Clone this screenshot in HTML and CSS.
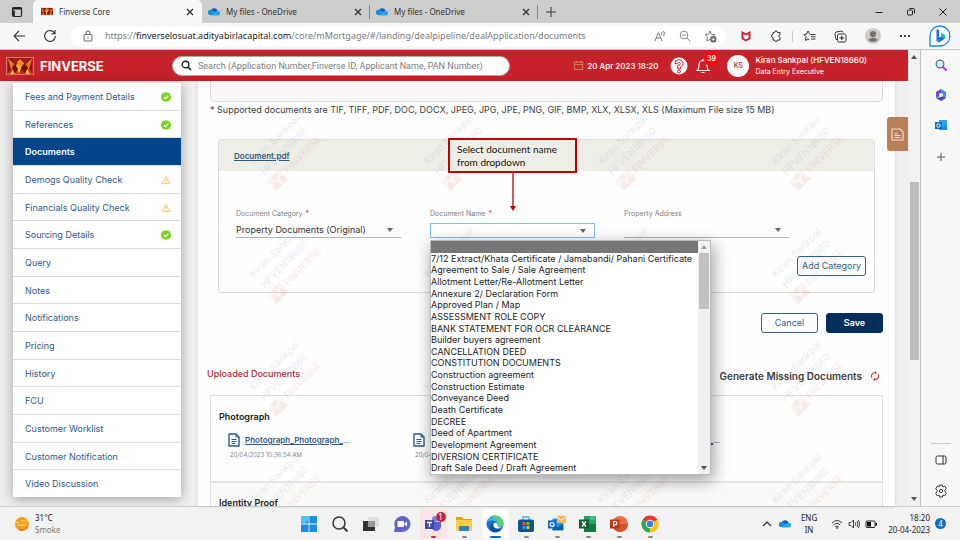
FILE: index.html
```
<!DOCTYPE html>
<html lang="en">
<head>
<meta charset="utf-8">
<meta name="viewport" content="width=device-width, initial-scale=1">
<title>Finverse Core</title>
<link rel="stylesheet" href="styles.css">
</head>
<body>
<svg class="defs" aria-hidden="true">
  <symbol id="i-cloud" viewBox="0 0 24 16"><path d="M7 4a7 7 0 0 1 12 2l-8 8H5A5 5 0 0 1 4 5z" fill="#0f5fb8"/><path d="M4 5a6 6 0 0 1 6 1l10 9H5A5 5 0 0 1 4 5z" fill="#1490df"/><path d="M19 6a5 5 0 0 1 0 10H5l9-7z" fill="#28a8ea"/></symbol>
  <symbol id="i-x" viewBox="0 0 10 10"><path d="M2 2l6 6M8 2L2 8" fill="none" stroke="currentColor" stroke-width="1.4"/></symbol>
  <symbol id="i-ok" viewBox="0 0 10 10"><path d="M5 0l1.4.8h1.7l.8 1.5L10 3.8v2.4L9 7.7l-.9 1.5H6.400L5 10l-1.400-.8H1.900L1 7.700 0 6.200V3.800l1-1.500.9-1.500h1.700z" fill="#7ed321"/><path d="M2.800 5.200l1.600 1.500 2.900-3.100" fill="none" stroke="#fff" stroke-width="1.300"/></symbol>
  <symbol id="i-warn" viewBox="0 0 12 10"><path d="M6 1l4.800 8.300H1.200z" fill="none" stroke="#fbbc3d" stroke-linejoin="round"/><path d="M6 3.800v2.700M6 7.200v1.200" stroke="#fbbc3d"/></symbol>
  <symbol id="i-doc" viewBox="0 0 12 14"><path d="M1 1h7l3 3v9H1z" fill="none" stroke="currentColor" stroke-width="1.400" stroke-linejoin="round"/><path d="M8 1v3h3" fill="none" stroke="currentColor"/><path d="M3.500 6.500h5M3.500 8.500h5M3.500 10.500h3.500" stroke="currentColor"/></symbol>
  <symbol id="i-logo" viewBox="0 0 28 18"><path fill="#8d1717" d="M0 0h28v18H0z"/><path fill="#d63a1f" d="M0 18L8 7l6 11zM14 18l7-12 7 12z"/><path fill="#e8742a" d="M0 0l8 7-4 6zM28 0l-8 7 4 6z"/><path fill="#a51a1a" d="M4 0h9L8 7zM15 0h9l-4 7z"/><path fill="#ffc02e" d="M14 3l2 6-3 9-4-9zM3 18l5-8 1 8zM20 18l2-7 3 7z"/><path fill="#7a1015" d="M8 7l4 5-4 6-3-8zM20 7l-5 4 4 7 4-7z"/><path fill="#ee8a2a" d="M14 1l5 5-4 4-2-1-3-4z"/></symbol>
</svg>

<header class="tabs">
  <button class="tool work" aria-label="Workspaces"><svg viewBox="0 0 12 12" width="12" height="12"><rect x="1.500" y="1.500" width="9" height="9" rx="1.500" fill="none" stroke="#222" stroke-width="1.200"/><path d="M1.500 2.500h9M3 4.500v5.500" stroke="#222" stroke-width="1.800"/></svg></button>
  <div class="tab on"><svg class="fav" viewBox="0 0 28 18"><use href="#i-logo"/></svg><span>Finverse Core</span><button class="tool" aria-label="Close tab"><svg width="10" height="10"><use href="#i-x"/></svg></button></div>
  <div class="tab"><svg class="fav"><use href="#i-cloud"/></svg><span>My files - OneDrive</span><button class="tool" aria-label="Close tab"><svg width="10" height="10"><use href="#i-x"/></svg></button></div>
  <div class="tab"><svg class="fav"><use href="#i-cloud"/></svg><span>My files - OneDrive</span><button class="tool" aria-label="Close tab"><svg width="10" height="10"><use href="#i-x"/></svg></button></div>
  <button class="tool plus" aria-label="New tab"><svg viewBox="0 0 12 12" width="12" height="12"><path d="M6 1v10M1 6h10" stroke="#333"/></svg></button>
  <div class="win">
    <button class="tool" aria-label="Minimize"><svg viewBox="0 0 10 10" width="10" height="10"><path d="M1.500 5.500h7" stroke="#222"/></svg></button>
    <button class="tool" aria-label="Restore"><svg viewBox="0 0 10 10" width="10" height="10"><rect x="1.500" y="3" width="5" height="5" rx="1" fill="none" stroke="#222"/><path d="M3.500 1.500h4a1 1 0 0 1 1 1v4" fill="none" stroke="#222"/></svg></button>
    <button class="tool" aria-label="Close"><svg viewBox="0 0 10 10" width="10" height="10"><path d="M1.500 1.500l7 7M8.500 1.500l-7 7" stroke="#222"/></svg></button>
  </div>
</header>

<nav class="bar" aria-label="Browser">
  <button class="tool nav" aria-label="Back"><svg viewBox="0 0 14 14" width="14" height="14"><path d="M13 7H2M7 2L2 7l5 5" fill="none" stroke="#333" stroke-width="1.100"/></svg></button>
  <button class="tool nav" aria-label="Refresh"><svg viewBox="0 0 14 14" width="14" height="14"><path d="M11.800 4.500A5.400 5.400 0 1 0 12.400 7M12 1v3.700H8.300" fill="none" stroke="#333" stroke-width="1.100"/></svg></button>
  <div class="addr">
    <svg viewBox="0 0 12 12" width="12" height="12"><rect x="2" y="4.500" width="8" height="6.500" rx="1" fill="none" stroke="#666"/><path d="M4 4.500V3a2 2 0 0 1 4 0v1.500" fill="none" stroke="#666"/><circle cx="6" cy="7.700" r=".8" fill="#666"/></svg>
    <div class="url">https://<b>finverselosuat.adityabirlacapital.com</b>/core/mMortgage/#/landing/dealpipeline/dealApplication/documents</div>
    <button class="tool" aria-label="Read aloud"><svg viewBox="0 0 12 12" width="12" height="12"><path d="M1 11L4.500 2.500 8 11M2.300 8h4.400M7.500 2q1.200 1 0 3M9.500 1q2 2 0 5" fill="none" stroke="#777"/></svg></button>
    <button class="tool" aria-label="Zoom out"><svg viewBox="0 0 12 12" width="12" height="12"><circle cx="5" cy="5" r="3.800" fill="none" stroke="#888"/><path d="M7.800 7.800l3.500 3.500M3.300 5h3.400" stroke="#888"/></svg></button>
    <button class="tool" aria-label="Add to favourites"><svg viewBox="0 0 13 13" width="13" height="13"><path d="M6 1l1.400 3.200 3.600.4-2.700 2.300M6 9.400L2.900 11l.7-3.900L1 4.600l3.600-.4L6 1" fill="none" stroke="#777"/><circle cx="9.300" cy="9.300" r="3.200" fill="#666"/><path d="M7.600 9.300H11M9.300 7.600V11" stroke="#fff" stroke-width=".8"/></svg></button>
  </div>
  <div class="exts">
    <button class="tool" aria-label="Security"><svg viewBox="0 0 12 12" width="12" height="12"><path d="M1.500 1L6 3.500 10.500 1v8L6 11.500 1.500 9zM3.500 4v4L6 9.500 8.500 8V4L6 5.500z" fill="#c8202f" fill-rule="evenodd"/></svg></button>
    <button class="tool" aria-label="Extensions"><svg viewBox="0 0 12 12" width="12" height="12"><path d="M3 2.500h1.500a1.500 1.500 0 0 1 3 0H10V5a1.200 1.200 0 0 0 0 2.500V10H7.500a1.500 1.500 0 0 1-3 0H3V7.500A1.500 1.500 0 0 1 3 4.500z" fill="none" stroke="#333"/></svg></button>
    <i class="rule"></i>
    <button class="tool" aria-label="Favourites"><svg viewBox="0 0 13 12" width="13" height="12"><path d="M7 4.200L5 1 3.700 4.100.9 4.500l2.200 2.300-.6 3.700L5 9l1.500.9M7.500 4.500h5M8 6.800h4.500M8 9h4.500" fill="none" stroke="#333"/></svg></button>
    <button class="tool" aria-label="Collections"><svg viewBox="0 0 13 13" width="13" height="13"><path d="M3 9.500H2L1 3.500 2 2l6-1 1.200 1.500" fill="none" stroke="#333"/><rect x="3.500" y="4" width="8.500" height="8" rx="1.500" fill="none" stroke="#333"/><path d="M7.800 5.800v4.400M5.600 8H10" stroke="#222"/></svg></button>
    <button class="tool" aria-label="Profile"><svg viewBox="0 0 16 16" width="16" height="16"><circle cx="8" cy="8" r="8" fill="#cfccc8"/><circle cx="8" cy="6" r="3.100" fill="#77736f"/><path d="M3 12q5-5 10 0-5 4-10 0z" fill="#77736f"/></svg></button>
    <button class="tool" aria-label="More"><svg viewBox="0 0 12 4" width="12" height="4"><circle cx="2" cy="2" r="1"/><circle cx="6" cy="2" r="1"/><circle cx="10" cy="2" r="1"/></svg></button>
    <button class="tool bing" aria-label="Bing"><svg viewBox="0 0 22 22" width="22" height="22"><path d="M1 21V10A10 10 0 1 1 11 21z" fill="#fff" stroke="#1a86e8" stroke-width="1.300"/><path d="M7.500 4l2.500 1v7.500l3-1.500-1.300-3L16 10v3.500L10 17.500 7.500 16z" fill="#1b72e8"/><path d="M11.700 8L16 10v3.500l-3-1.500z" fill="#25b6f0"/></svg></button>
  </div>
</nav>

<div class="mid">
  <div class="app">
    <header class="top">
      <svg class="logo" viewBox="0 0 28 18"><use href="#i-logo"/></svg>
      <strong class="brand">FINVERSE</strong>
      <label class="search"><svg viewBox="0 0 11 11" width="11" height="11"><circle cx="4.500" cy="4.500" r="3.300" fill="none" stroke="#222" stroke-width="1.400"/><path d="M7 7l3 3" stroke="#222" stroke-width="1.700"/></svg><input type="search" aria-label="Search" placeholder="Search (Application Number,Finverse ID, Applicant Name, PAN Number)"></label>
      <div class="user">
        <svg viewBox="0 0 9 9" width="9" height="9"><rect x=".5" y="1" width="8" height="7.500" fill="none" stroke="#d97b52"/><path d="M0 3.500h9M2.500 0v1.500M6.500 0v1.500" stroke="#d97b52"/></svg>
        <time>20 Apr 2023 18:20</time>
        <button class="tool help" aria-label="Help"><svg viewBox="0 0 18 18" width="18" height="18"><circle cx="9" cy="9" r="8.500" fill="#fff"/><path d="M5 6.500a4 3.600 0 1 1 5.300 3.200V12H7.800V8.300c3 .1 3-2.800 1.200-2.800-1 0-1.400.6-1.500 1.400z" fill="none" stroke="#c8222b"/><circle cx="9" cy="14.500" r="1.500" fill="none" stroke="#c8222b"/></svg></button>
        <button class="tool bell" aria-label="Notifications, 39"><svg viewBox="0 0 14 16" width="14" height="16"><path d="M1 12.500q2-1.500 2-6a4 4 0 0 1 8 0q0 4.500 2 6z" fill="none" stroke="#fff" stroke-width="1.100"/><path d="M5.500 14.500h3M7 1v1.500" stroke="#fff" stroke-width="1.100"/></svg><span class="count">39</span></button>
        <span class="av">KS</span>
        <div class="who"><strong>Kiran Sankpal (HFVEN18660)</strong><span>Data Entry Executive</span></div>
      </div>
    </header>

    <div class="body">
      <nav class="menu" aria-label="Application sections">
        <a href="#">Fees and Payment Details<svg class="ok"><use href="#i-ok"/></svg></a>
        <a href="#">References<svg class="ok"><use href="#i-ok"/></svg></a>
        <a href="#" class="on" aria-current="page">Documents</a>
        <a href="#">Demogs Quality Check<svg class="ok"><use href="#i-warn"/></svg></a>
        <a href="#">Financials Quality Check<svg class="ok"><use href="#i-warn"/></svg></a>
        <a href="#">Sourcing Details<svg class="ok"><use href="#i-ok"/></svg></a>
        <a href="#">Query</a>
        <a href="#">Notes</a>
        <a href="#">Notifications</a>
        <a href="#">Pricing</a>
        <a href="#">History</a>
        <a href="#">FCU</a>
        <a href="#">Customer Worklist</a>
        <a href="#">Customer Notification</a>
        <a href="#">Video Discussion</a>
      </nav>

      <main class="page">
        <div class="drop"></div>
        <p class="note">* Supported documents are TIF, TIFF, PDF, DOC, DOCX, JPEG, JPG, JPE, PNG, GIF, BMP, XLX, XLSX, XLS (Maximum File size 15 MB)</p>

        <section class="card">
          <div class="card-head"><a href="#">Document.pdf</a></div>
          <div class="fields">
            <div class="field">
              <label for="cat">Document Category <em>*</em></label>
              <div class="sel"><select id="cat"><option>Property Documents (Original)</option></select></div>
            </div>
            <div class="field">
              <label for="name">Document Name <em>*</em></label>
              <div class="sel focus"><select id="name"><option></option></select></div>
              <div class="callout">Select document name from dropdown<svg viewBox="0 0 6 38" width="6" height="38"><path d="M3 0v34" stroke="#c00000" stroke-width="1.300"/><path d="M0 33h6l-3 5z" fill="#c00000"/></svg></div>
              <div class="pop">
                <ul role="listbox" aria-label="Document Name">
                  <li role="option" aria-selected="true" aria-label="None"></li>
                  <li role="option">7/12 Extract/Khata Certificate / Jamabandi/ Pahani Certificate</li>
                  <li role="option">Agreement to Sale / Sale Agreement</li>
                  <li role="option">Allotment Letter/Re-Allotment Letter</li>
                  <li role="option">Annexure 2/ Declaration Form</li>
                  <li role="option">Approved Plan / Map</li>
                  <li role="option">ASSESSMENT ROLE COPY</li>
                  <li role="option">BANK STATEMENT FOR OCR CLEARANCE</li>
                  <li role="option">Builder buyers agreement</li>
                  <li role="option">CANCELLATION DEED</li>
                  <li role="option">CONSTITUTION DOCUMENTS</li>
                  <li role="option">Construction agreement</li>
                  <li role="option">Construction Estimate</li>
                  <li role="option">Conveyance Deed</li>
                  <li role="option">Death Certificate</li>
                  <li role="option">DECREE</li>
                  <li role="option">Deed of Apartment</li>
                  <li role="option">Development Agreement</li>
                  <li role="option">DIVERSION CERTIFICATE</li>
                  <li role="option">Draft Sale Deed / Draft Agreement</li>
                </ul>
                <div class="sb"><svg viewBox="0 0 6 4" width="6" height="4"><path d="M0 4l3-4 3 4z" fill="#a0a0a0"/></svg><i></i><svg viewBox="0 0 6 4" width="6" height="4"><path d="M0 0l3 4 3-4z" fill="#505050"/></svg></div>
              </div>
            </div>
            <div class="field">
              <label for="addr">Property Address</label>
              <div class="sel"><select id="addr"><option></option></select></div>
            </div>
          </div>
          <div class="add"><button class="btn">Add Category</button></div>
        </section>

        <div class="actions"><button class="btn wide">Cancel</button><button class="btn wide solid">Save</button></div>

        <div class="heads">
          <h2>Uploaded Documents</h2>
          <div class="gen">Generate Missing Documents<button class="tool" aria-label="Refresh documents"><svg viewBox="0 0 10 10" width="10" height="10"><path d="M2 7A3.600 3.600 0 0 1 5.500 1.500M8 3A3.600 3.600 0 0 1 4.500 8.500" fill="none" stroke="#d8323c" stroke-width="1.100"/><path d="M5 0l2 1.600-2 1.600zM5 6.800L3 8.400 5 10z" fill="#d8323c"/></svg></button></div>
        </div>

        <div class="groups">
          <section class="group">
            <h3>Photograph</h3>
            <div class="files">
              <div class="file"><svg class="doc"><use href="#i-doc"/></svg><div><span class="fn"><a href="#">Photograph_Photograph_</a>…</span><time>20/04/2023 10:36:54 AM</time></div></div>
              <div class="file"><svg class="doc"><use href="#i-doc"/></svg><div><span class="fn"><a href="#">Photograph_Photograph_</a>…</span><time>20/04/2023 10:36:54 AM</time></div></div>
              <div class="file"><svg class="doc"><use href="#i-doc"/></svg><div><span class="fn"><a href="#">Photograph_Photograph_</a>…</span><time>20/04/2023 10:36:54 AM</time></div></div>
            </div>
          </section>
          <section class="group alt"><h3>Identity Proof</h3></section>
        </div>

        <svg class="wm" aria-hidden="true">
          <defs><pattern id="wm" width="174" height="113" patternUnits="userSpaceOnUse">
            <g transform="translate(56 84) rotate(-45)">
              <text class="w1" x="0" y="0">Kiran Sankpal</text>
              <text class="w1" x="0" y="15">HFVEN18660</text>
              <text class="w2" x="18" y="30">FINVERSE</text>
              <g fill="#d8432b"><path d="M-3 21h18v13H-3z" opacity=".45"/><path d="M-3 34l5-9 4 9zM6 34l5-9 4 9zM2 21h8l-4 6z"/></g>
            </g>
          </pattern></defs>
          <rect width="100%" height="100%" fill="url(#wm)"/>
        </svg>
      </main>
      <button class="side" aria-label="Notes panel"><svg viewBox="0 0 13 13" width="13" height="13"><path d="M1 1h8l3 3v8H1z" fill="none" stroke="#f3dccb" stroke-width="1.200" stroke-linejoin="round"/><path d="M3.500 5.500h3M3.500 7.500h6M3.500 9.500h6" stroke="#f3dccb"/></svg></button>
    </div>
  </div>

  <div class="scroll"><svg viewBox="0 0 6 4" width="6" height="4"><path d="M0 4l3-4 3 4z" fill="#555"/></svg><div class="track"><i></i></div><svg viewBox="0 0 6 4" width="6" height="4"><path d="M0 0l3 4 3-4z" fill="#555"/></svg></div>

  <aside class="rail">
    <button class="tool" aria-label="Search"><svg viewBox="0 0 12 12" width="12" height="12"><circle cx="5" cy="5" r="3.800" fill="#d5effb" stroke="#5b7387" stroke-width="1.300"/><path d="M8 8l3 3" stroke="#b23ae0" stroke-width="2" stroke-linecap="round"/></svg></button>
    <button class="tool" aria-label="Microsoft 365"><svg viewBox="0 0 12 12" width="12" height="12"><path d="M6 0L1 3v6l5-2.500L7 4z" fill="#6a4ad0"/><path d="M6 0l5 3v6L7 6.500V4z" fill="#4d84e8"/><path d="M1 9l5 3 5-3-4-2.500L6 8z" fill="#3d49b8"/><circle cx="6" cy="6" r="2" fill="#f7f7f7"/></svg></button>
    <button class="tool" aria-label="Outlook"><svg viewBox="0 0 12 12" width="12" height="12"><path d="M4 1h8v10H4z" fill="#28a8ea"/><path d="M4 6l4 2 4-2v5H4z" fill="#1490df"/><path d="M0 3h7v7H0z" fill="#0f6cbd"/><circle cx="3.500" cy="6.500" r="1.700" fill="none" stroke="#fff"/></svg></button>
    <button class="tool" aria-label="Customize"><svg viewBox="0 0 12 16" width="12" height="16"><path d="M6 4v8M2 8h8" stroke="#555"/></svg></button>
    <span class="sp"></span><hr>
    <button class="tool" aria-label="Sidebar"><svg viewBox="0 0 12 12" width="12" height="12"><rect x="1" y="2" width="10" height="8" rx="1.500" fill="none" stroke="#333"/><path d="M8 2v8" stroke="#333"/></svg></button>
    <button class="tool" aria-label="Settings"><svg viewBox="0 0 14 14" width="14" height="14"><path d="M5.600 1h2.800l.5 1.900 1.900-.6 1.500 2.400L11 6.200v1.600l1.300 1.500-1.500 2.400-1.900-.6-.5 1.900H5.600l-.5-1.900-1.900.6-1.500-2.400L3 7.800V6.200L1.700 4.700l1.500-2.400 1.900.6z" fill="none" stroke="#333" stroke-linejoin="round"/><circle cx="7" cy="7" r="1.600" fill="none" stroke="#333"/></svg></button>
  </aside>
</div>

<footer class="task">
  <div class="weather"><svg viewBox="0 0 16 16" width="16" height="16"><circle cx="9" cy="8" r="7" fill="#f5a01c"/><path d="M3 11h12a7 7 0 0 1-12 0z" fill="#e36a12"/><path d="M0 12h7M4 9h9M1 6.500h5M7 12h6M8 5h7" stroke="#ffd97a"/></svg><div><span>31°C</span><span class="dim">Smoke</span></div></div>
  <div class="apps">
    <button aria-label="Start"><svg viewBox="0 0 18 18"><path fill="#1c8fe0" d="M1 1h7.600v7.600H1zM9.400 1H17v7.600H9.400zM1 9.400h7.600V17H1zM9.400 9.400H17V17H9.400z"/><path fill="#4cc2f5" d="M1 1h7.600v4L5 8.600H1z"/></svg></button>
    <button aria-label="Search"><svg viewBox="0 0 18 18"><circle cx="8" cy="8" r="6" fill="none" stroke="#333" stroke-width="1.500"/><path d="M12.500 12.500l4 4" stroke="#333" stroke-width="1.800"/></svg></button>
    <button aria-label="Task view"><svg viewBox="0 0 18 18"><path fill="#333" d="M1 6h12v10H1z"/><path fill="#ddd" d="M6 2h11v10H6z" opacity=".9"/><path fill="#999" d="M6 6h7v6H6z"/></svg></button>
    <button aria-label="Chat"><svg viewBox="0 0 18 18"><path d="M1 17l1-5A8 8 0 1 1 9 17z" fill="#6264c7"/><rect x="4.500" y="6" width="6.500" height="6" rx="1" fill="#fff"/><path fill="#fff" d="M11.500 8.500L14 6.500v5l-2.500-2z"/></svg></button>
    <button class="alert run" aria-label="Teams, 1"><svg viewBox="0 0 18 18"><circle cx="11" cy="4" r="3" fill="#7b83eb"/><path d="M8 7h9v4a5 5 0 0 1-9 3z" fill="#5b62c9"/><path d="M1 5h9v9H1z" fill="#4148ae"/><path d="M3 7.500h5M5.500 7.500V12" stroke="#fff" stroke-width="1.300"/></svg><span class="one">1</span></button>
    <button class="run" aria-label="File Explorer"><svg viewBox="0 0 18 18"><path d="M1 2h6l2 2h8v4H1z" fill="#e0a21a"/><path d="M1 5h16v11H1z" fill="#fccb45"/><path d="M4 16v-4q0-1 1-1h8q1 0 1 1v4z" fill="#2a80c9"/></svg></button>
    <button class="cur" aria-label="Edge"><svg viewBox="0 0 18 18"><circle cx="9" cy="9" r="8.500" fill="#1677cc"/><path d="M1 7A8.500 8.500 0 0 1 17.500 9c0 3.500-5.500 3.800-6 1.500C12 6 6 4 1 7z" fill="#35b9e0"/><path d="M9 .5A8.500 8.500 0 0 1 17.500 9c0 3.500-5.500 3.800-6 1.500C13.500 6 9 3 5 1.700 6 1 7.500.5 9 .5z" fill="#59cf72"/><path d="M7 8.500c-1 4.500 4 6.500 9.300 4.700C13.500 18 8 18.500 5 15.500 2.500 12.500 4 9 7 8.500z" fill="#0b4f9e"/><path d="M7.500 9q1.500-2 3.500-.5 1 1 .5 2.200 1 2.300 4.500 1.500-5 2.800-8-.2-1-1.500-.5-3z" fill="#f4fafd"/></svg></button>
    <button class="run" aria-label="Store"><svg viewBox="0 0 18 18"><path d="M6 5V2h6v3" fill="none" stroke="#35b4ea" stroke-width="1.300"/><rect x="1" y="4.500" width="16" height="12.500" rx="2" fill="#14518e"/><path fill="#f05124" d="M5.500 7h3v3h-3z"/><path fill="#80bc06" d="M9.500 7h3v3h-3z"/><path fill="#05a6f0" d="M5.500 11h3v3h-3z"/><path fill="#ffba08" d="M9.500 11h3v3h-3z"/></svg></button>
    <button class="run" aria-label="Outlook"><svg viewBox="0 0 20 18"><path fill="#1e90dc" d="M5 3h12v13H5z"/><path fill="#0c5cab" d="M5 9l6 4 6-4v7H5z"/><path fill="#f3b65c" d="M10 0h10v8H10z"/><path d="M10 1l5 4 5-4" fill="none" stroke="#fff"/><path fill="#0f6cbd" d="M0 5h9v9H0z"/><circle cx="4.500" cy="9.500" r="2.200" fill="none" stroke="#fff" stroke-width="1.300"/></svg></button>
    <button class="run" aria-label="Excel"><svg viewBox="0 0 18 18"><path fill="#21a366" d="M5 1h12v8H5z"/><path fill="#107c41" d="M5 9h12v8H5z"/><path fill="#33c481" d="M11 1h6v4h-6z"/><path fill="#185c37" d="M0 4.500h10v9H0z"/><path d="M3 6.500l4 5M7 6.500l-4 5" stroke="#fff" stroke-width="1.300"/></svg></button>
    <button class="run" aria-label="PowerPoint"><svg viewBox="0 0 18 18"><circle cx="10" cy="9" r="8" fill="#ed6c47"/><path d="M10 9h8a8 8 0 0 1-14.500 4.500z" fill="#d35230"/><path fill="#b7361b" d="M0 4.500h9.500v9H0z"/><path d="M3.500 12V6.500h1.700a1.600 1.600 0 0 1 0 3.300H3.500" fill="none" stroke="#fff" stroke-width="1.200"/></svg></button>
    <button class="run" aria-label="Chrome"><svg viewBox="0 0 18 18"><path d="M9 9L1.600 4.700A8.500 8.500 0 0 1 16.400 4.700z" fill="#e33b2e"/><path d="M9 9l7.400-4.300A8.500 8.500 0 0 1 9 17.500z" fill="#fbc116"/><path d="M9 9v8.500A8.500 8.500 0 0 1 1.600 4.700z" fill="#2da94f"/><circle cx="9" cy="9" r="4.200" fill="#fff"/><circle cx="9" cy="9" r="3.300" fill="#3f7ee8"/></svg></button>
  </div>
  <div class="tray">
    <svg viewBox="0 0 10 6" width="10" height="6"><path d="M1 5l4-4 4 4" fill="none" stroke="#222" stroke-width="1.100"/></svg>
    <svg width="12" height="9"><use href="#i-cloud"/></svg>
    <div class="lang"><span>ENG</span><span>IN</span></div>
    <svg viewBox="0 0 12 10" width="12" height="10"><path d="M1 4q5-5 10 0M2.700 6q3.300-3.400 6.600 0M4.300 7.800q1.700-1.700 3.400 0" fill="none" stroke="#333"/><circle cx="6" cy="9" r=".8"/></svg>
    <svg viewBox="0 0 12 10" width="12" height="10"><path d="M1 3.500h2L5.500 1v8L3 6.500H1zM7.300 3.300q1 1.700 0 3.400M9 2q2 3 0 6M10.500 1q2.500 4 0 8" fill="none" stroke="#333" stroke-width=".9"/></svg>
    <svg viewBox="0 0 12 10" width="12" height="10"><rect x="1" y="2" width="9" height="6.500" rx="1" fill="none" stroke="#222"/><path d="M2 3h4v4.500H2zM10.500 4h1.500v2.500h-1.500z"/></svg>
    <div class="clock"><time>18:20</time><time>20-04-2023</time></div>
    <span class="four">4</span>
  </div>
</footer>
</body>
</html>
```
FILE: styles.css
```
* { box-sizing: border-box; }
body {
  margin: 0;
  height: 100vh;
  display: flex;
  flex-direction: column;
  overflow: hidden;
  font-family: Inter, Roboto, sans-serif;
  font-size: 9px;
  line-height: 12px;
  color: #3c3c3c;
  background: #f7f7f7;
}
button, input, select { font: inherit; color: inherit; }
svg { display: block; flex: none; }
a { color: #2c5a87; text-decoration: none; }
h2, h3, p, ul { margin: 0; padding: 0; font-size: inherit; }
.defs { position: absolute; width: 0; height: 0; }
.tool { border: 0; padding: 0; background: none; display: grid; place-items: center; flex: none; }

/* Tab strip */
.tabs { display: flex; align-items: stretch; height: 23px; background: #cdcdcd; font: 8px/12px "Noto Sans", sans-serif; color: #333; flex: none; }
.work { width: 33px; }
.tab { flex: 0 1 168px; display: flex; align-items: center; padding: 0 7px 0 6px; gap: 6px; min-width: 0; }
.tab.on { background: #f7f7f7; border-radius: 5px 5px 0 0; flex-basis: 169px; padding-left: 8px; }
.tab:not(.on)::after { content: ""; align-self: center; width: 1px; height: 14px; background: #8c8c8c; }
.tab:not(.on) { padding-right: 0; }
.tab span { flex: 1; white-space: nowrap; }
.fav { width: 12px; height: 9px; }
.plus { width: 26px; }
.win { margin-left: auto; display: flex; gap: 22px; padding-right: 12px; }

/* Address bar */
.bar { display: flex; align-items: center; height: 27px; padding: 0 9px 0 12px; background: #f7f7f7; border-bottom: 1px solid #c9c9c9; flex: none; }
.nav { width: 14px; margin-right: 17px; }
.addr { flex: 1; display: flex; align-items: center; gap: 13px; height: 21px; margin-left: -4px; padding: 0 9px 0 12px; border-radius: 11px; background: #fff; }
.url { flex: 1; margin-left: -2px; white-space: nowrap; overflow: hidden; font: 9px/14px "Noto Sans", sans-serif; color: #7a7a7a; }
.url b { font-weight: 400; color: #222; }
.exts { display: flex; align-items: center; gap: 18px; padding-left: 14px; }
.rule { width: 1px; height: 11px; margin: 0 -8px; background: #ccc; }

/* Middle area */
.mid { flex: 1; display: flex; min-height: 0; }
.app { flex: 1; display: flex; flex-direction: column; min-width: 0; background: #efefef; }
.top { display: flex; align-items: center; height: 31px; padding: 0 41px 0 6px; background: #c72229; color: #fff; flex: none; }
.logo { width: 28px; height: 18px; border: 1px solid #d9776c; }
.brand { font-size: 13px; line-height: 16px; margin-left: 6px; width: 132px; }
.search { flex: 0 1 338px; display: flex; align-items: center; gap: 6px; height: 20px; padding: 0 8px; border-radius: 10px; background: #fff; border: 1px solid #a9a9a9; }
.search input { flex: 1; min-width: 0; border: 0; padding: 0; background: none; outline: 0; font-family: Roboto, sans-serif; appearance: none; }
.search input::placeholder { color: #7b7b7b; opacity: 1; }
.user { margin-left: auto; display: flex; align-items: center; font-size: 8px; font-weight: 500; }
.user > time { margin-left: 4px; }
.help { margin-left: 12px; }
.bell { position: relative; margin-left: 8px; }
.count { position: absolute; left: 8px; top: -6px; width: 14px; height: 14px; border-radius: 50%; background: #ff0a0a; color: #fff; font-size: 7px; line-height: 14px; font-weight: 600; text-align: center; }
.av { width: 22px; height: 22px; margin: 0 6px 0 17px; border-radius: 50%; background: #fff; color: #a8232a; font-size: 7px; line-height: 22px; text-align: center; }
.who { display: grid; }
.who strong { font-weight: 500; }
.who span { font-size: 7px; font-weight: 400; }

.body { flex: 1; display: flex; min-height: 0; padding-left: 13px; }
.menu { width: 168px; margin: 1px 17px 9px 0; display: flex; flex-direction: column; background: #fff; box-shadow: 0 2px 12px #0005; flex: none; }
.menu a { flex: 1; display: flex; align-items: center; justify-content: space-between; padding: 1px 10px 0 12px; border: solid #dedede; border-width: 1px 0 0; }
.menu a.on { background: #02458a; color: #fff; font-weight: 600; }
.ok { width: 10px; height: 10px; }

.page { position: relative; flex: 1; min-width: 0; padding: 0 12px; background: #fefefe; box-shadow: 0 0 4px #0002; display: flex; flex-direction: column; overflow: hidden; }
.page > * { flex: none; }
.drop { height: 21px; border: 1px solid #dadada; border-top: 0; border-radius: 0 0 5px 5px; background: #f7f7f7; }
.note { margin-top: 2px; white-space: nowrap; }
.card { margin: 23px 8px 0; border: 1px solid #dcdcdc; border-radius: 3px; }
.card-head { height: 31px; padding: 10px 15px; background: #eeede6; border-radius: 3px 3px 0 0; line-height: 12px; }
.card-head a { font-size: 8px; font-weight: 600; text-decoration: underline; }
.fields { display: grid; grid-template-columns: repeat(3, minmax(0, 165px)); column-gap: 29px; padding: 37px 17px 0; }
.field { position: relative; }
.field label { display: block; font-size: 7px; line-height: 12px; color: #808080; }
.field em { color: #e33; font-style: normal; margin-left: 1px; }
.sel { position: relative; margin-top: 3px; height: 15px; border-bottom: 1px solid #b5b5b5; }
.sel.focus { border: 1px solid #7cc0f5; background: #fff; }
.sel select { display: block; width: 100%; height: 100%; border: 0; padding: 0; appearance: none; background: none; outline: 0; color: #333; }
.sel::after { content: ""; position: absolute; right: 8px; top: 5px; border: solid transparent; border-width: 4px 3px 0; border-top-color: #666; }
.callout { position: absolute; z-index: 4; left: 18px; top: -70px; width: 129px; height: 35px; padding: 3px 7px; border: 2px solid #c00000; background: #eeeee6; color: #111; font: 10px/13px Lato, sans-serif; }
.callout svg { position: absolute; left: 60px; top: 33px; }
.pop { position: absolute; z-index: 5; left: 0; top: 32px; width: 281px; height: 235px; display: flex; border: 1px solid #bcbcbc; background: #fff; box-shadow: 2px 5px 16px #0006; color: #222; }
.pop ul { flex: 1; display: grid; grid-auto-rows: 1fr; list-style: none; }
.pop li { min-height: 0; line-height: 12px; white-space: nowrap; }
.pop li[aria-selected="true"] { background: #767676; }
.sb { width: 12px; padding: 4px 1px; background: #f1f1f1; display: flex; flex-direction: column; align-items: center; }
.sb i { width: 10px; height: 56px; margin: 4px 0 auto; background: #c1c1c1; }
.add { display: flex; justify-content: flex-end; padding: 18px 8px 16px; }
.btn { height: 20px; padding: 0 4px; border: 1px solid #2f6090; border-radius: 3px; background: none; color: #2f5b87; }
.wide { width: 57px; }
.solid { background: #022e5b; border-color: #022e5b; color: #fff; font-weight: 600; }
.actions { display: flex; justify-content: flex-end; gap: 8px; margin-top: 20px; }
.heads { display: flex; align-items: flex-start; justify-content: space-between; margin-top: 35px; padding: 0 3px 0 0; }
h2 { font-weight: 500; color: #b02a30; margin-left: -3px; }
.gen { display: flex; align-items: center; gap: 8px; padding-top: 1px; font-size: 10px; line-height: 14px; font-weight: 600; }
.groups { flex: 1; margin: 12px 0 0; border: 1px solid #e0e0e0; border-bottom: 0; }
.group { padding: 15px 8px 21px; }
.group h3 { font-weight: 600; color: #222; }
.alt { padding-top: 14px; border-top: 2px solid #e6e6e6; background: #f9f9f7; }
.files { display: grid; grid-template-columns: repeat(3, 185px); margin: 10px 0 0 9px; }
.file { display: flex; gap: 5px; color: #2c5a87; }
.doc { width: 12px; height: 14px; }
.file > div { display: grid; gap: 3px; justify-items: start; }
.fn a { font-size: 8px; font-weight: 600; text-decoration: underline; }
.fn { font-size: 8px; line-height: 14px; }
.file time { margin-left: -15px; font-size: 6px; line-height: 10px; color: #7d889a; }
.wm { position: absolute; inset: 0; width: 100%; height: 100%; z-index: 2; pointer-events: none; opacity: .1; }
.w1 { font: 10px Inter, sans-serif; fill: #24579c; }
.w2 { font: 500 10px Inter, sans-serif; fill: #e0483a; }
.side { width: 21px; height: 34px; margin: 36px 0 0 -8px; position: relative; z-index: 3; display: grid; place-items: center; padding: 0; border: 0; border-radius: 3px 0 0 3px; background: #b97f58; flex: none; }

.scroll { width: 13px; padding: 5px 0 5px; background: #f1f1f1; border-right: 1px solid #c4c4c4; display: flex; flex-direction: column; align-items: center; flex: none; }
.track { flex: 1; width: 9px; margin: 4px 0; display: grid; grid-template-rows: 122fr 182fr 136fr; }
.track i { grid-row: 2; background: #bdbdbd; }
.rail { width: 39px; padding: 9px 0 8px; display: flex; flex-direction: column; align-items: center; gap: 18px; background: #f7f7f7; flex: none; }
.rail .sp { flex: 1; }
.rail hr { width: 20px; height: 1px; margin: 0 0 -8px; border: 0; background: #c9c9c9; }

/* Taskbar */
.task { display: grid; grid-template-columns: 1fr auto 1fr; align-items: center; height: 34px; padding: 0 14px 0 13px; background: #f2f2f2; border-top: 1px solid #cfcfcf; font: 8px/12px "Noto Sans", sans-serif; color: #222; flex: none; }
.weather { display: flex; align-items: center; gap: 6px; }
.weather div, .lang, .clock { display: grid; }
.dim { color: #777; }
.apps { display: flex; }
.apps button { position: relative; width: 31px; height: 30px; padding: 0; border: 0; border-radius: 3px; background: none; display: grid; place-items: center; }
.apps svg { width: 18px; height: 18px; }
.apps .alert { background: #fbe4e4; background-clip: content-box; padding: 0 2px; }
.apps .cur { background: #fbfbfb; background-clip: content-box; padding: 0 2px; }
.run::after, .cur::after { content: ""; position: absolute; bottom: 1px; left: 13px; width: 5px; height: 2px; border-radius: 1px; background: #8b8b8b; }
.alert::after { background: #c4314b; }
.cur::after { left: 10px; width: 11px; background: #0f6cbd; }
.one { position: absolute; right: 3px; top: 3px; width: 10px; height: 10px; border-radius: 50%; background: #c4213c; color: #fff; line-height: 10px; }
.tray { justify-self: end; display: flex; align-items: center; gap: 5px; }
.tray > svg:first-child { margin-right: 2px; }
.lang { text-align: center; margin: 0 9px 0 5px; }
.clock { text-align: right; margin-left: 6px; }
.four { width: 11px; height: 11px; border-radius: 50%; background: #0f6cbd; color: #fff; line-height: 11px; text-align: center; }
```
